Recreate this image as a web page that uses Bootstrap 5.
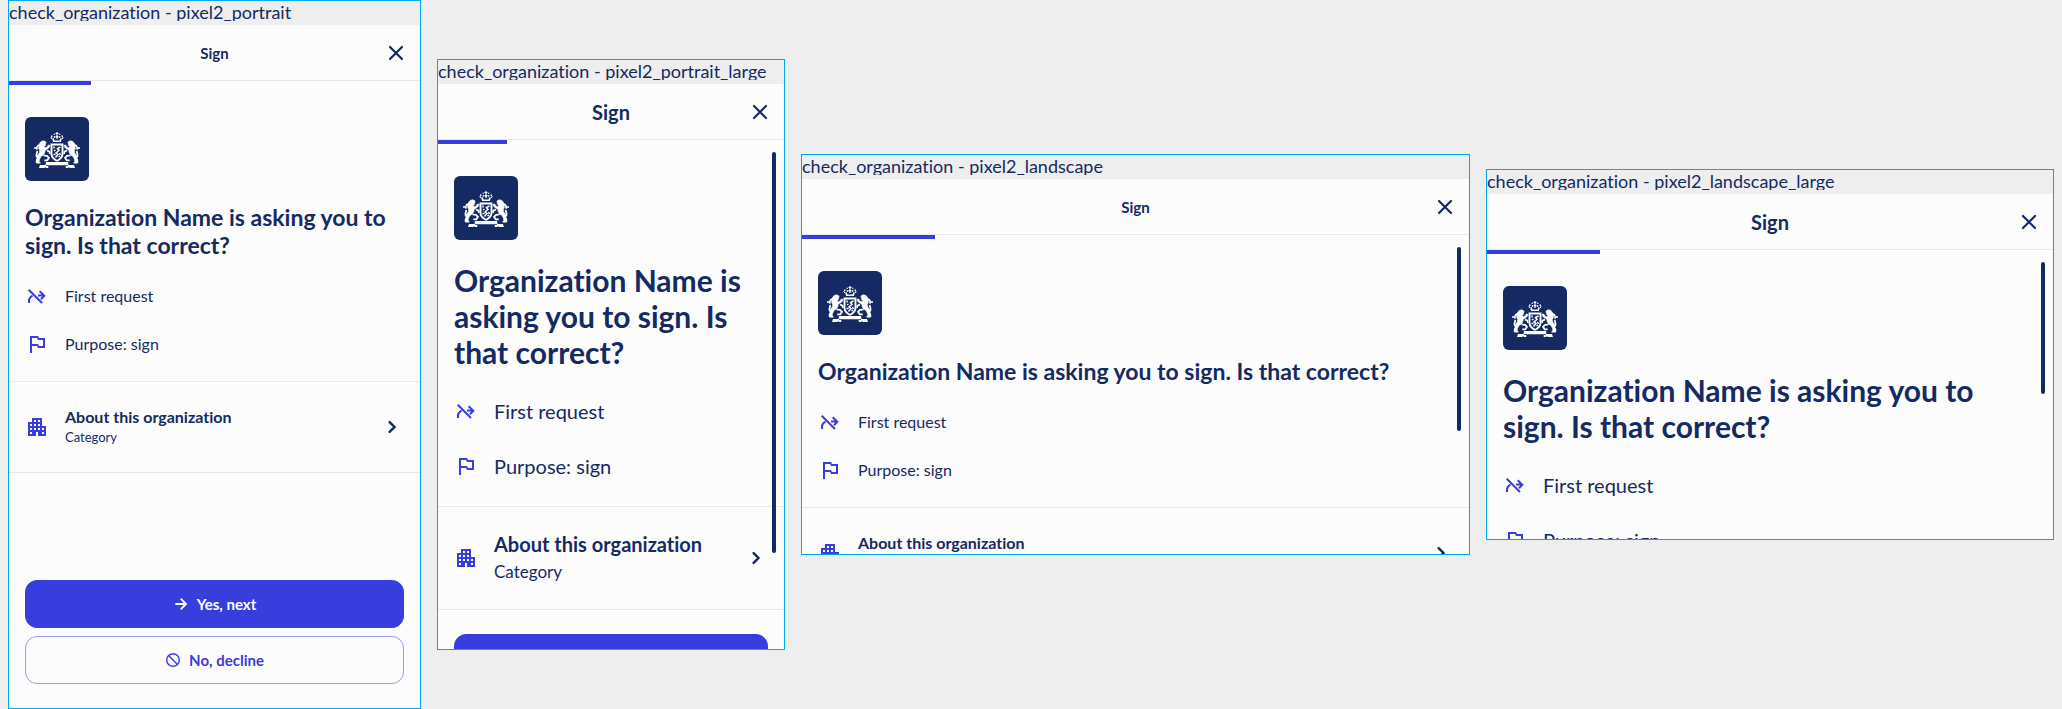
<!DOCTYPE html>
<html lang="en">
<head>
<meta charset="utf-8">
<meta name="viewport" content="width=device-width, initial-scale=1">
<title>check_organization</title>
<link rel="stylesheet" href="https://cdn.jsdelivr.net/npm/bootstrap@5.3.0/dist/css/bootstrap.min.css">
<style>
  :root { --ink: #152a62; --accent: #383ede; --line: #e8e8ea; --paper: #fcfcfc; --frame: #00a9f4; }
  body { background: #eee; color: var(--ink); font-family: Lato, "Noto Sans", sans-serif; }
  body, button { font-variant-ligatures: none; }
  .board { display: grid; grid-template-columns: 413fr 348fr 669fr 568fr; align-items: center; padding: 0 8px; gap: 16px; }
  .device { border: 1px solid var(--frame); overflow: hidden; background: var(--paper); width: 100%; min-width: 0;
    --title: 15px; --head: 23px; --head-line: 28px; --text: 16px; --row: 48px; --sub: 13px; --item: 90px; --item-line: 20px; --about: 16px; }
  .device.large { --title: 20px; --head: 30px; --head-line: 36px; --text: 20px; --row: 55px; --sub: 17px; --item: 102px; --item-line: 28px; --about: 20px; }
  .portrait { aspect-ratio: 413 / 709; }
  .portrait-large { aspect-ratio: 348 / 591; }
  .landscape { aspect-ratio: 669 / 401; }
  .landscape-large { aspect-ratio: 568 / 371; }
  .frame-name { background: #eee; height: 24px; flex: none; }
  .frame-name span { display: block; height: 20px; line-height: 22px; font-size: 18px; overflow: hidden; white-space: nowrap; }
  .topbar { height: 56px; flex: none; border-bottom: 1px solid #e6e7f0; padding: 0 12px; display: grid; grid-template-columns: 24px 1fr 24px; align-items: center; }
  .topbar h1 { font-size: var(--title); line-height: 24px; font-weight: 700; }
  .bare { border: 0; background: none; padding: 0; color: inherit; }
  .steps { height: 4px; flex: none; border-radius: 0; background: none; }
  .steps .progress-bar { width: 20%; background: var(--accent); }
  .scroller { padding-top: 32px; }
  .thumb { position: absolute; right: 8px; top: 8px; width: 4px; border-radius: 2px; background: var(--ink); }
  .portrait-large .thumb { height: 401px; }
  .landscape .thumb { height: 184px; }
  .landscape-large .thumb { height: 132px; }
  .logo { width: 64px; height: 64px; border-radius: 6px; background: var(--ink); margin: 0 16px; flex: none; }
  .ask { font-size: var(--head); line-height: var(--head-line); font-weight: 700; margin: 22px 16px 13px; }
  .facts { padding: 0 16px 13px; }
  .facts li { height: var(--row); font-size: var(--text); line-height: 24px; }
  .about { width: 100%; height: calc(var(--item) + 2px); flex: none; border: solid var(--line); border-width: 1px 0; padding: 0 16px; text-align: left; }
  .about strong, .about small { display: block; line-height: var(--item-line); }
  .about strong { font-size: var(--about); font-weight: 700; }
  .about small { font-size: var(--sub); }
  .ico { width: 24px; height: 24px; flex: none; display: block; }
  .tint { color: var(--accent); }
  .actions { padding: 24px 16px; }
  .portrait .actions { margin-top: auto; }
  .actions .btn { height: 48px; border-radius: 12px; font-size: 15px; line-height: 20px; font-weight: 700; --bs-btn-bg: var(--accent); --bs-btn-border-color: var(--accent); }
  .actions .decline { --bs-btn-bg: transparent; --bs-btn-border-color: #9b9eee; --bs-btn-color: var(--accent); }
  .actions .ico { width: 16px; height: 16px; }
  @media (max-width: 1200px) { .board { grid-template-columns: 1fr; } .device { aspect-ratio: auto; } }
</style>
</head>
<body>
<svg class="d-none" aria-hidden="true">
  <symbol id="close" viewBox="0 0 24 24"><path d="M6 6l12 12M18 6L6 18" fill="none" stroke="currentColor" stroke-width="2.2" stroke-linecap="round"/></symbol>
  <symbol id="chevron" viewBox="0 0 24 24"><path d="M9.6 7.1l4.9 4.9-4.9 4.9" fill="none" stroke="currentColor" stroke-width="2.4" stroke-linecap="round"/></symbol>
  <symbol id="first" viewBox="0 0 24 24"><path d="M3.7 5.7L17 19M4 19v-2.5q0-3 3.5-4.8M13 11.6h6.5M14.7 7.2l4.6 4.5-3.3 3.5" fill="none" stroke="currentColor" stroke-width="2"/></symbol>
  <symbol id="flag" viewBox="0 0 24 24"><path fill="currentColor" d="M14 6l-1-2H5v17h2v-7h5l1 2h7V6h-6zm4 8h-4l-1-2H7V6h5l1 2h5v6z"/></symbol>
  <symbol id="building" viewBox="0 0 24 24"><path fill="currentColor" d="M17 11V3H7v4H3v14h8v-4h2v4h8V11h-4zM7 19H5v-2h2v2zm0-4H5v-2h2v2zm0-4H5V9h2v2zm4 4H9v-2h2v2zm0-4H9V9h2v2zm0-4H9V5h2v2zm4 8h-2v-2h2v2zm0-4h-2V9h2v2zm0-4h-2V5h2v2zm4 12h-2v-2h2v2zm0-4h-2v-2h2v2z"/></symbol>
  <symbol id="arrow" viewBox="0 0 16 16"><path d="M3 8h9.500M8.300 3.200L13 8l-4.700 4.800" fill="none" stroke="currentColor" stroke-width="1.800" stroke-linecap="round"/></symbol>
  <symbol id="block" viewBox="0 0 16 16"><g fill="none" stroke="currentColor" stroke-width="1.400"><circle cx="8" cy="8" r="6.3"/><path d="M3.600 3.600l8.800 8.800"/></g></symbol>
  <symbol id="arms" viewBox="0 0 64 64">
    <g id="arms-half">
      <!-- crown -->
      <path fill="#fff" d="M32 15h-.6v1h-.9v1h.9v2h-.9v1.500h.9V22H32zM27.200 22l1 3H32v-1.500h-2.500L28.600 21zM26 18.500h1.500V20H26zM28.500 16.800h1.500v1h-1.500zM25.200 20.300h1.300l.9 1.700h-1.200zM28.800 19h1v2h-1z"/>
      <!-- lion -->
      <path fill="#fff" stroke="#fff" stroke-width=".5" d="M14.500 26.500l1.500-2 2.500-.8 2 .8.800 1.500-1 1 .4 1.300-1.500 1 .8 1.400 2.200-.8 1-1.900 1.800.3-.4 1.600-2 2.200-2.400 1.200-.4 2.500-1.300 2.200-2.500 1.500-1.500 3-.3 2.700h1v1h-3.700l-.5-1 1-3.500.2-3 2.200-3 .2-2.500-1.100-2 .4-2-1.400.3.700-1.500z"/>
      <path fill="none" stroke="#fff" stroke-width="1.700" d="M18.500 38.500l3.500.3 2 2-1.700 2.500h-3M22 33.500l2.500 1.200.5 2.200M9 31h2l1.500 1.500M13 28l-1.500 3.500M13.500 41q-2.500-1-2-3.500t1-3.500M12 42l-.5 3"/>
      <!-- shield edge -->
      <path fill="none" stroke="#fff" stroke-width="1.900" d="M32 27.500h-5.500V37q0 4 5.500 7"/>
      <path fill="#fff" d="M21 45h11v3.200H20.500zM15 48h6v1h2.300v2h-2.500v-.8l-2 .8h-4.800z"/>
    </g>
    <use href="#arms-half" transform="matrix(-1 0 0 1 64 0)"/>
    <!-- shield lion -->
    <path fill="none" stroke="#fff" stroke-width="1.500" d="M35.500 30l-3 1.500 1.500 2-3 2.500 2 1.500-2.500 3M29 29.500v2M29 34l1.500-1M28.500 37.500h2M34.500 36l1 2M33.500 40l1.500-1"/>
  </symbol>
</svg>

<main class="board min-vh-100">
  <section class="device portrait d-flex flex-column">
    <div class="frame-name"><span>check_organization - pixel2_portrait</span></div>
    <header class="topbar"><span></span><h1 class="m-0 text-center">Sign</h1><button class="bare" type="button" aria-label="Close"><svg class="ico"><use href="#close"/></svg></button></header>
    <div class="progress steps"><div class="progress-bar"></div></div>
    <div class="scroller d-flex flex-column flex-grow-1">
      <svg class="logo" role="img" aria-label="Coat of arms"><use href="#arms"/></svg>
      <h2 class="ask">Organization Name is asking you to sign. Is that correct?</h2>
      <ul class="facts list-unstyled m-0">
        <li class="d-flex align-items-center gap-3"><svg class="ico tint"><use href="#first"/></svg>First request</li>
        <li class="d-flex align-items-center gap-3"><svg class="ico tint"><use href="#flag"/></svg>Purpose: sign</li>
      </ul>
      <button class="bare about d-flex align-items-center gap-3" type="button"><svg class="ico tint"><use href="#building"/></svg><span class="flex-grow-1"><strong>About this organization</strong><small>Category</small></span><svg class="ico"><use href="#chevron"/></svg></button>
      <div class="actions d-grid gap-2">
        <button class="btn btn-primary d-flex align-items-center justify-content-center gap-2" type="button"><svg class="ico"><use href="#arrow"/></svg>Yes, next</button>
        <button class="btn decline d-flex align-items-center justify-content-center gap-2" type="button"><svg class="ico"><use href="#block"/></svg>No, decline</button>
      </div>
    </div>
  </section>

  <section class="device portrait-large large d-flex flex-column">
    <div class="frame-name"><span>check_organization - pixel2_portrait_large</span></div>
    <header class="topbar"><span></span><h1 class="m-0 text-center">Sign</h1><button class="bare" type="button" aria-label="Close"><svg class="ico"><use href="#close"/></svg></button></header>
    <div class="progress steps"><div class="progress-bar"></div></div>
    <div class="scroller d-flex flex-column position-relative">
      <svg class="logo" role="img" aria-label="Coat of arms"><use href="#arms"/></svg>
      <h2 class="ask">Organization Name is asking you to sign. Is that correct?</h2>
      <ul class="facts list-unstyled m-0">
        <li class="d-flex align-items-center gap-3"><svg class="ico tint"><use href="#first"/></svg>First request</li>
        <li class="d-flex align-items-center gap-3"><svg class="ico tint"><use href="#flag"/></svg>Purpose: sign</li>
      </ul>
      <button class="bare about d-flex align-items-center gap-3" type="button"><svg class="ico tint"><use href="#building"/></svg><span class="flex-grow-1"><strong>About this organization</strong><small>Category</small></span><svg class="ico"><use href="#chevron"/></svg></button>
      <div class="actions d-grid">
        <button class="btn btn-primary" type="button" aria-label="Yes, next"></button>
      </div>
      <div class="thumb"></div>
    </div>
  </section>

  <section class="device landscape d-flex flex-column">
    <div class="frame-name"><span>check_organization - pixel2_landscape</span></div>
    <header class="topbar"><span></span><h1 class="m-0 text-center">Sign</h1><button class="bare" type="button" aria-label="Close"><svg class="ico"><use href="#close"/></svg></button></header>
    <div class="progress steps"><div class="progress-bar"></div></div>
    <div class="scroller d-flex flex-column position-relative">
      <svg class="logo" role="img" aria-label="Coat of arms"><use href="#arms"/></svg>
      <h2 class="ask">Organization Name is asking you to sign. Is that correct?</h2>
      <ul class="facts list-unstyled m-0">
        <li class="d-flex align-items-center gap-3"><svg class="ico tint"><use href="#first"/></svg>First request</li>
        <li class="d-flex align-items-center gap-3"><svg class="ico tint"><use href="#flag"/></svg>Purpose: sign</li>
      </ul>
      <button class="bare about d-flex align-items-center gap-3" type="button"><svg class="ico tint"><use href="#building"/></svg><span class="flex-grow-1"><strong>About this organization</strong><small>&nbsp;</small></span><svg class="ico"><use href="#chevron"/></svg></button>
      <div class="thumb"></div>
    </div>
  </section>

  <section class="device landscape-large large d-flex flex-column">
    <div class="frame-name"><span>check_organization - pixel2_landscape_large</span></div>
    <header class="topbar"><span></span><h1 class="m-0 text-center">Sign</h1><button class="bare" type="button" aria-label="Close"><svg class="ico"><use href="#close"/></svg></button></header>
    <div class="progress steps"><div class="progress-bar"></div></div>
    <div class="scroller d-flex flex-column position-relative">
      <svg class="logo" role="img" aria-label="Coat of arms"><use href="#arms"/></svg>
      <h2 class="ask">Organization Name is asking you to sign. Is that correct?</h2>
      <ul class="facts list-unstyled m-0">
        <li class="d-flex align-items-center gap-3"><svg class="ico tint"><use href="#first"/></svg>First request</li>
        <li class="d-flex align-items-center gap-3"><svg class="ico tint"><use href="#flag"/></svg>Purpose: sign</li>
      </ul>
      <div class="thumb"></div>
    </div>
  </section>
</main>
<script src="https://cdn.jsdelivr.net/npm/bootstrap@5.3.0/dist/js/bootstrap.bundle.min.js"></script>
</body>
</html>
